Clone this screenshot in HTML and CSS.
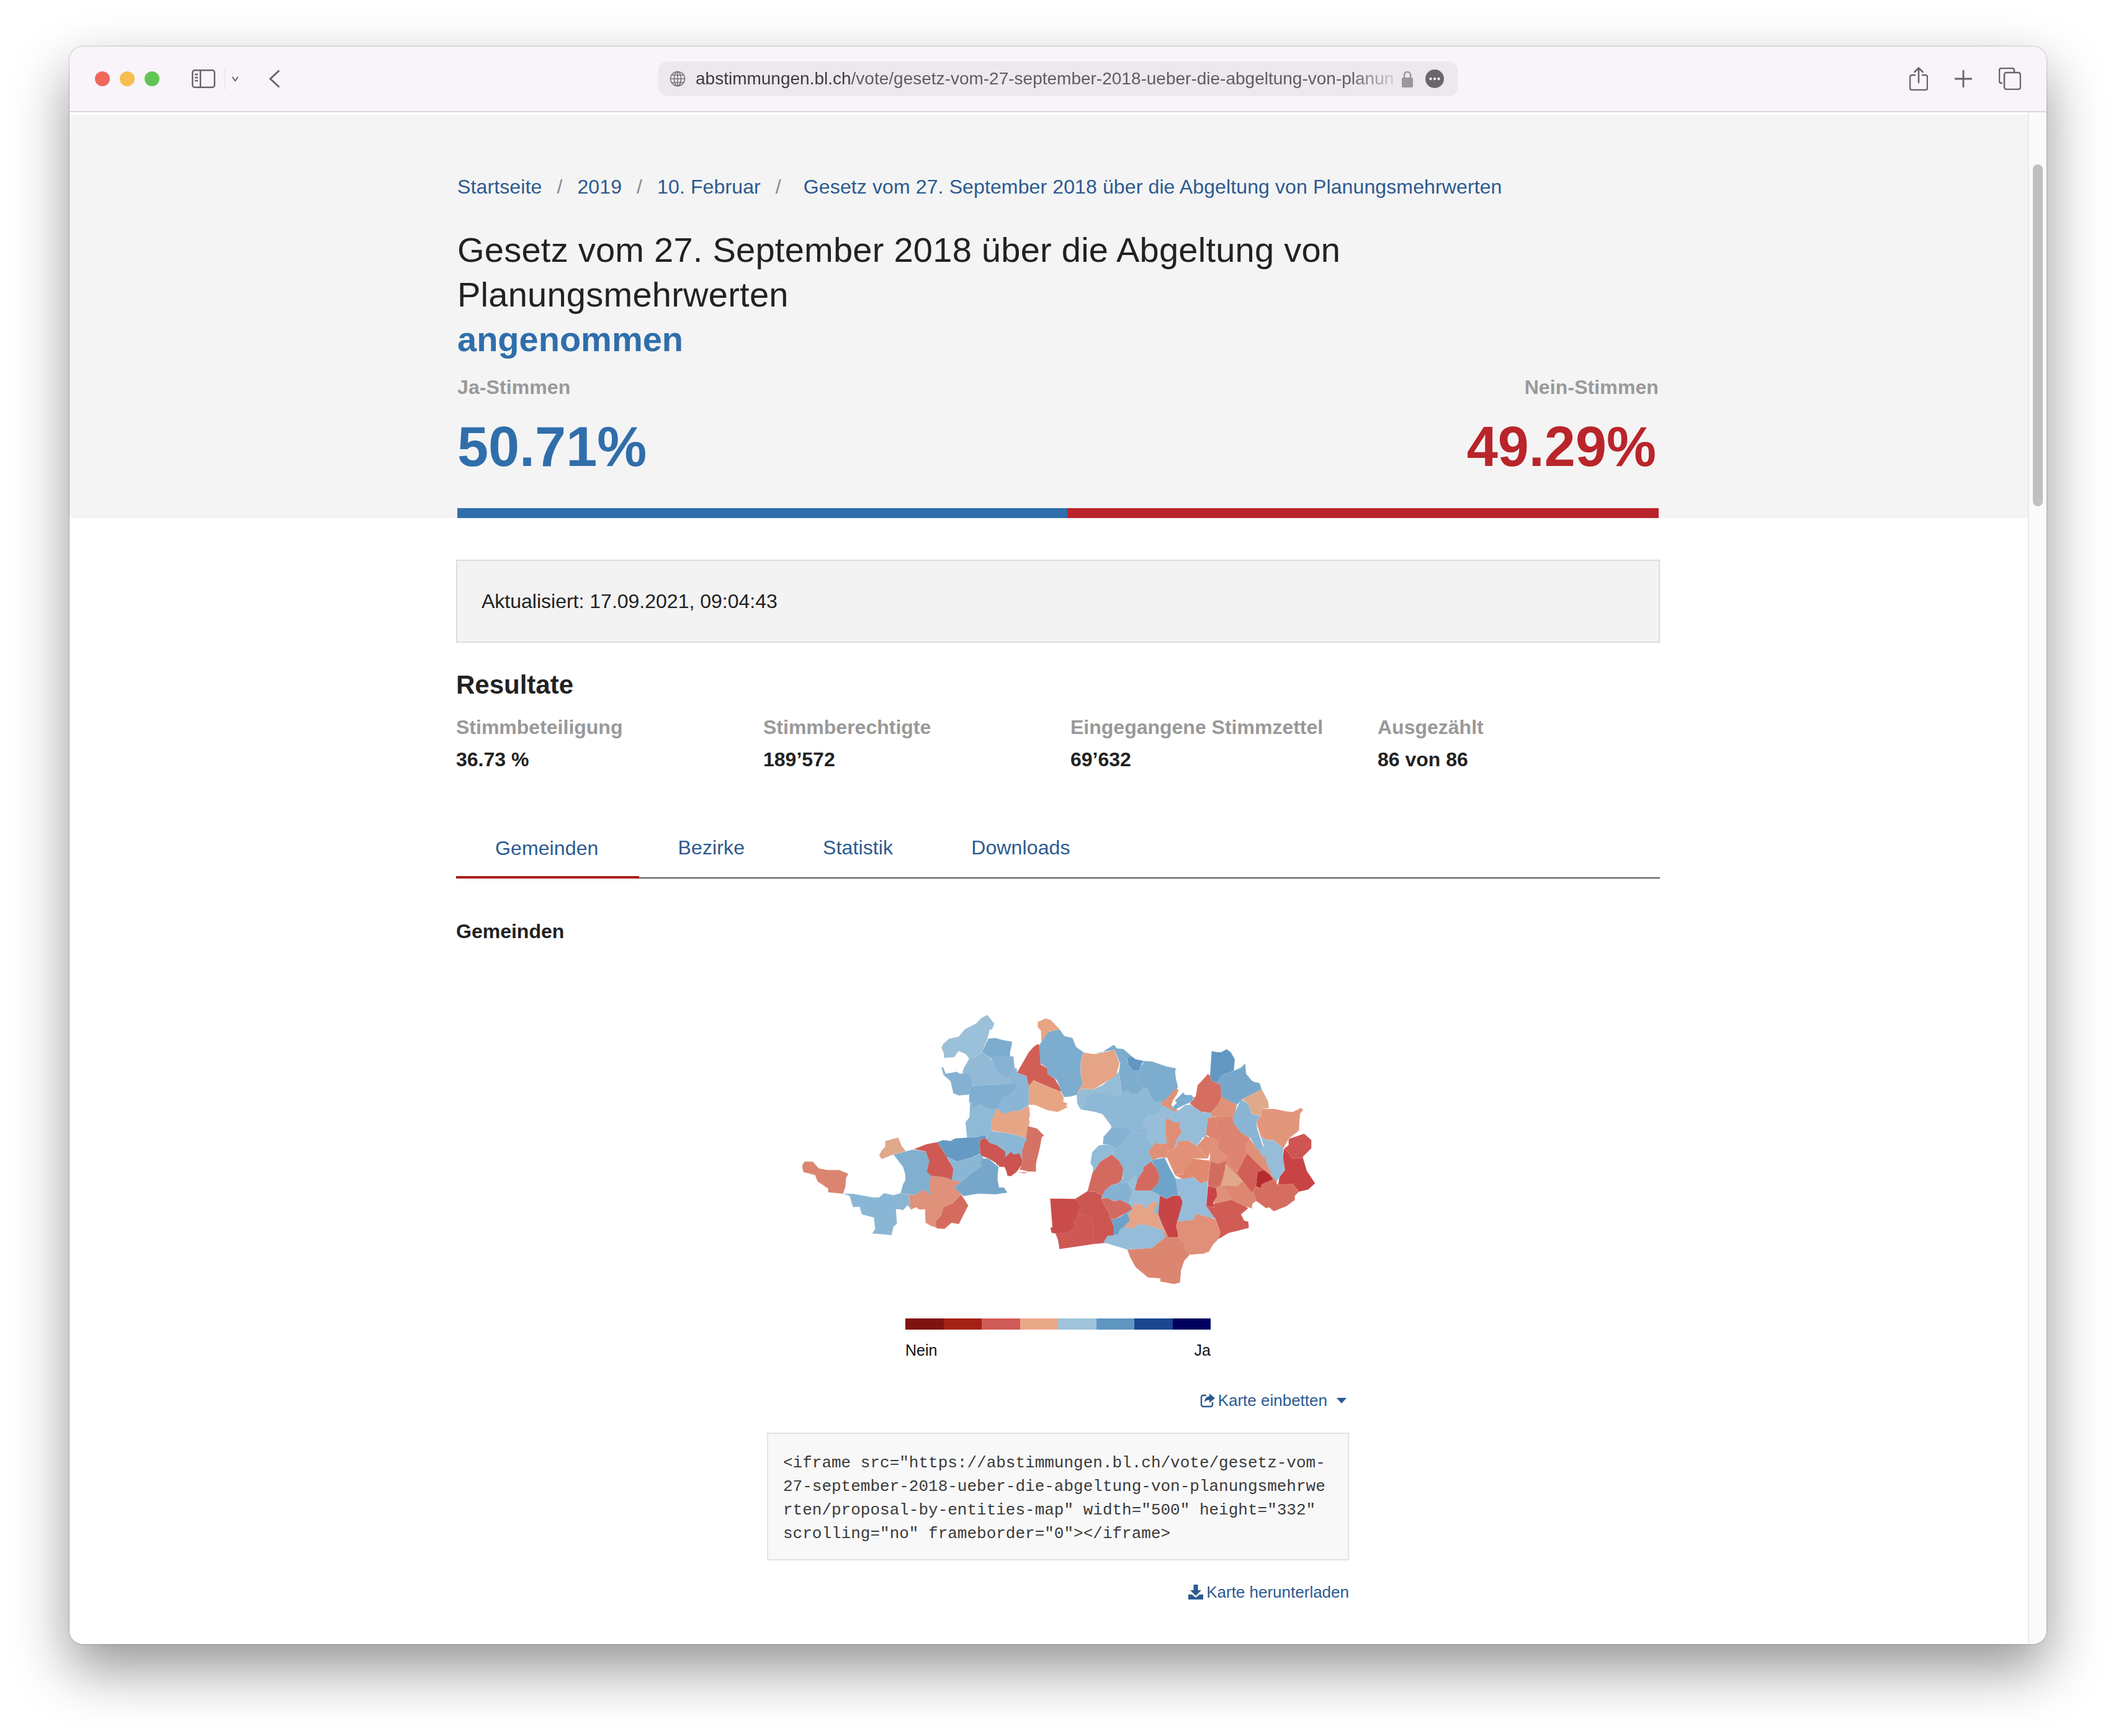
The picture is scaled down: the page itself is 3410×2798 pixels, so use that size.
FILE: index.html
```html
<!DOCTYPE html>
<html lang="de">
<head>
<meta charset="utf-8">
<title>Gesetz vom 27. September 2018</title>
<link rel="stylesheet" href="styles.css">
</head>
<body>
<div class="window">
  <header class="toolbar">
    <div class="lights"><i class="light red"></i><i class="light yellow"></i><i class="light green"></i></div>
    <svg class="ic-sidebar" width="38" height="30" viewBox="0 0 38 30"><rect x="1.25" y="1.25" width="35.5" height="27.5" rx="3.5" fill="none" stroke="#68646a" stroke-width="2.5"/><path d="M14 1v28" stroke="#68646a" stroke-width="2.5"/><path d="M5 8h5M5 13h5M5 18h5" stroke="#68646a" stroke-width="2.5"/></svg>
    <i class="tb-divider"></i>
    <svg class="ic-chev" width="10" height="9" viewBox="0 0 10 9"><path d="M1 1.5l4 6 4-6" fill="none" stroke="#68646a" stroke-width="2" stroke-linecap="round" stroke-linejoin="round"/></svg>
    <svg class="ic-back" width="18" height="28" viewBox="0 0 18 28"><path d="M16 1.5L2.5 14 16 26.5" fill="none" stroke="#68646a" stroke-width="3" stroke-linecap="round" stroke-linejoin="round"/></svg>
    <div class="urlbar">
      <svg class="ic-globe" width="26" height="26" viewBox="0 0 26 26" fill="none" stroke="#77737a" stroke-width="1.6"><circle cx="13" cy="13" r="11.5"/><ellipse cx="13" cy="13" rx="5.5" ry="11.5"/><path d="M13 1.5v23M1.5 13h23M3.5 7h19M3.5 19h19"/></svg>
      <span class="url"><b>abstimmungen.bl.ch</b>/vote/gesetz-vom-27-september-2018-ueber-die-abgeltung-von-planun</span>
      <svg class="ic-lock" width="20" height="27" viewBox="0 0 20 27"><path d="M5 12V7a5 5 0 0 1 10 0v5" fill="none" stroke="#9a969b" stroke-width="2.4"/><rect x="1" y="11" width="18" height="16" rx="2.5" fill="#9a969b"/></svg>
      <svg class="ic-more" width="30" height="30" viewBox="0 0 30 30"><circle cx="15" cy="15" r="15" fill="#69656b"/><circle cx="8.5" cy="15" r="2.2" fill="#f0edf1"/><circle cx="15" cy="15" r="2.2" fill="#f0edf1"/><circle cx="21.5" cy="15" r="2.2" fill="#f0edf1"/></svg>
    </div>
    <div class="tb-right">
      <svg width="30" height="38" viewBox="0 0 30 38" fill="none" stroke="#68646a" stroke-width="2.5" stroke-linecap="round" stroke-linejoin="round"><path d="M9 13H4a3 3 0 0 0-3 3v18a3 3 0 0 0 3 3h22a3 3 0 0 0 3-3V16a3 3 0 0 0-3-3h-5"/><path d="M15 25V2M8.5 8L15 1.5 21.5 8"/></svg>
      <svg width="28" height="28" viewBox="0 0 28 28"><path d="M14 1v26M1 14h26" stroke="#68646a" stroke-width="2.8" stroke-linecap="round"/></svg>
      <svg width="36" height="36" viewBox="0 0 36 36" fill="none" stroke="#68646a" stroke-width="2.5"><path d="M6 25H4a3 3 0 0 1-3-3V4a3 3 0 0 1 3-3h18a3 3 0 0 1 3 3v3"/><rect x="9" y="8" width="26" height="27" rx="3.5"/></svg>
    </div>
  </header>
  <div class="viewport">
    <main class="page">
      <section class="hero">
        <nav class="crumbs">
          <a>Startseite</a><span class="sep">/</span><a>2019</a><span class="sep">/</span><a>10. Februar</a><span class="sep sep-last">/</span><a>Gesetz vom 27. September 2018 über die Abgeltung von Planungsmehrwerten</a>
        </nav>
        <h1 class="title">Gesetz vom 27. September 2018 über die Abgeltung von<br>Planungsmehrwerten</h1>
        <div class="verdict">angenommen</div>
        <div class="vote-labels"><span>Ja-Stimmen</span><span>Nein-Stimmen</span></div>
        <div class="vote-nums"><span class="yes">50.71%</span><span class="no">49.29%</span></div>
        <div class="vote-bar"><i class="bar-yes"></i><i class="bar-no"></i></div>
      </section>
      <section class="content">
        <div class="updated">Aktualisiert: 17.09.2021, 09:04:43</div>
        <h2 class="results">Resultate</h2>
        <div class="stats">
          <div><div class="stat-label">Stimmbeteiligung</div><div class="stat-value">36.73 %</div></div>
          <div><div class="stat-label">Stimmberechtigte</div><div class="stat-value">189’572</div></div>
          <div><div class="stat-label">Eingegangene Stimmzettel</div><div class="stat-value">69’632</div></div>
          <div><div class="stat-label">Ausgezählt</div><div class="stat-value">86 von 86</div></div>
        </div>
        <div class="tabs">
          <a class="tab active">Gemeinden</a><a class="tab">Bezirke</a><a class="tab">Statistik</a><a class="tab">Downloads</a>
        </div>
        <h3 class="sub">Gemeinden</h3>
        <svg class="map" width="900" height="500" viewBox="1255 1600 900 500" stroke="#fff" stroke-opacity=".28" stroke-width=".9">
          <g transform="translate(1260 1600) scale(.3827 .3333)" stroke="none">
            <polygon fill="#8ab5d4" points="790,330 960,325 975,400 1035,420 1035,550 885,650 882,690 810,690 790,610 795,480 765,392"/>
            <polygon fill="#8bb6d5" points="865,705 1025,710 1010,835 945,830 905,830 850,780"/>
            <polygon fill="#dc8f78" points="1030,660 1070,680 1060,860 1005,855"/>
            <polygon fill="#80afd0" points="500,790 610,780 720,830 830,800 900,850 900,960 760,975 640,985 520,970 520,880"/>
          </g>
          <g transform="translate(1660 1600) scale(.3333)" stroke="none">
            <polygon fill="#8db8d6" points="250,480 640,480 700,570 870,590 850,700 660,745 610,810 700,900 850,925 850,1030 890,1090 700,1110 640,1130 430,1150 460,1020 350,990 450,900 425,800 400,760 360,720 395,650 350,590 250,560"/>
            <polygon fill="#dc8a72" points="860,610 990,590 1070,720 1200,880 1170,1040 1090,1010 1060,1040 900,1030 860,930 870,800"/>
            <polygon fill="#7dadce" points="440,340 700,370 710,470 630,530 440,490"/>
            <polygon fill="#d8766a" points="790,510 920,440 990,380 1110,450 1030,510 940,560 880,590 790,560"/>
            <polygon fill="#dc8a72" points="540,1190 700,1100 890,1100 900,1200 750,1270 540,1240"/>
            <polygon fill="#cc5552" points="200,1010 340,990 400,1100 400,1205 150,1235 120,1160"/>
          </g>
          <g transform="translate(1260 1600) scale(.3827 .3333)">
            <polygon fill="#9bc0d9" points="865,110 895,153 885,180 875,182 865,230 842,290 810,318 788,322 775,300 745,285 725,315 683,318 682,295 672,270 680,250 705,225 745,215 770,180 805,160 820,150 840,125"/>
            <polygon fill="#7cacce" points="870,225 900,222 930,232 970,240 965,270 960,300 965,320 880,320 842,290"/>
            <polygon fill="#92bad6" points="790,320 810,318 842,290 880,322 900,370 930,405 960,420 960,437 900,450 835,450 800,458 800,405 760,390 765,370 785,330"/>
            <polygon fill="#86b2d3" points="880,315 955,312 975,310 980,365 970,375 965,415 930,405 900,370"/>
            <polygon fill="#84b1d2" points="672,362 680,365 690,395 715,390 735,385 750,395 775,390 800,405 800,458 790,465 790,495 745,500 722,490 710,430 680,400"/>
            <polygon fill="#7faed0" points="835,450 905,450 990,438 985,470 960,495 930,510 905,565 870,565 838,542 805,562 802,533 788,533 790,465 800,458"/>
            <polygon fill="#8ab5d4" points="970,365 990,370 990,390 1030,405 1040,440 1040,545 1030,555 1000,575 970,575 940,590 905,565 930,510 960,495 985,470 990,438 965,437 960,420 965,415"/>
            <polygon fill="#d15f57" points="1075,252 1085,255 1090,350 1120,370 1120,395 1150,420 1175,470 1175,482 1125,460 1060,427 1040,455 1030,405 990,390 1040,290 1060,265"/>
            <polygon fill="#e7a583" points="1060,427 1125,460 1175,482 1187,510 1185,530 1205,540 1195,550 1205,555 1180,570 1160,580 1115,570 1065,545 1040,545 1040,455"/>
            <polygon fill="#8fb9d6" points="805,562 838,542 870,565 905,565 882,625 882,670 865,700 820,700 780,705 773,630 790,605"/>
            <polygon fill="#e6a685" points="905,565 940,590 970,575 1000,575 1030,555 1040,550 1045,590 1040,620 1045,625 1025,705 1000,695 940,680 882,670 882,625"/>
            <polygon fill="#d47365" points="1035,647 1075,660 1105,695 1095,700 1085,760 1070,830 1070,868 1040,868 1000,858 1015,825 1010,770 1030,705"/>
            <polygon fill="#8bb6d5" points="882,672 940,680 1000,695 1025,705 1033,712 1015,740 1010,780 1000,780 965,770 945,790 940,760 905,740 860,710 865,700"/>
            <polygon fill="#cd5552" points="845,708 860,708 875,730 905,740 940,770 942,795 910,840 900,825 870,805 835,790 833,720"/>
            <polygon fill="#cb5350" points="965,772 975,785 1000,780 1012,810 1012,830 990,868 1020,872 1040,868 1020,877 990,868 965,890 950,888 945,865 937,845 915,845 912,830 942,797"/>
            <polygon fill="#659bc3" points="655,725 680,715 710,720 730,707 830,700 850,692 862,700 860,708 845,708 833,720 835,780 800,800 738,820 695,797"/>
            <polygon fill="#cf5a55" points="555,760 610,735 655,725 695,797 723,855 715,908 690,897 628,888 610,870 620,815 605,770"/>
            <polygon fill="#8ab6d5" points="697,798 738,820 800,800 835,780 848,800 835,825 845,840 800,875 757,918 718,907 723,855"/>
            <polygon fill="#76a7cb" points="840,805 870,805 912,845 908,905 915,945 935,945 950,970 900,978 825,975 765,987 725,942 757,918 800,875 845,840 835,825"/>
            <polygon fill="#80afd0" points="470,785 550,762 605,770 620,815 610,870 628,888 620,935 627,983 597,955 560,982 500,972 510,930 525,900 510,845 490,815"/>
            <polygon fill="#e0a98c" points="435,720 490,703 505,745 522,770 470,785 420,808 410,790 420,765 435,750"/>
            <polygon fill="#db8570" points="95,820 130,820 155,852 190,860 240,860 280,878 270,900 268,940 258,975 195,968 195,950 150,915 140,885 90,870 85,840"/>
            <polygon fill="#8ab6d5" points="258,975 300,975 385,993 410,992 430,972 470,982 500,972 535,978 543,1052 530,1030 510,1055 495,1050 480,1050 485,1120 470,1135 462,1175 380,1167 393,1145 387,1090 337,1075 327,1037 300,1040 285,985"/>
            <polygon fill="#df9179" points="628,888 690,897 715,908 755,918 725,942 755,978 720,1020 680,1040 670,1080 645,1110 652,1140 628,1130 605,1115 603,1050 580,1052 565,1040 543,1052 535,978 560,982 597,955 627,983 620,935"/>
            <polygon fill="#d56b5f" points="755,978 767,1000 785,1032 745,1122 715,1115 685,1145 652,1142 645,1110 670,1080 680,1040 720,1020"/>
          </g>
          <g transform="translate(1660 1600) scale(.3333)">
            <polygon fill="#e7a583" points="37,145 75,127 100,135 143,180 90,192 75,248 55,240 52,185 37,170"/>
            <polygon fill="#7cacce" points="90,192 143,180 165,212 205,222 222,265 258,290 245,340 245,400 255,440 225,497 195,505 165,508 150,480 130,425 85,395 85,370 50,345 45,255"/>
            <polygon fill="#c94c4b" points="97,998 218,1000 245,1035 232,1065 230,1085 210,1110 218,1135 185,1162 130,1168 105,1165 98,1142 108,1135"/>
            <polygon fill="#cc5552" points="218,1000 278,962 312,965 350,983 342,1010 378,1060 385,1095 405,1130 405,1210 310,1218 302,1095 232,1065 245,1035"/>
            <polygon fill="#ce5854" points="232,1065 302,1095 305,1135 310,1218 142,1243 130,1168 185,1162 218,1135 210,1110 230,1085"/>
            <polygon fill="#92bbd7" points="332,742 375,735 420,757 395,785 340,820 300,890 305,850 292,825 300,775"/>
            <polygon fill="#d4695f" points="395,785 430,815 450,850 445,905 425,925 390,935 350,983 312,965 278,962 300,880 340,820"/>
            <polygon fill="#85b2d3" points="395,655 450,648 490,675 465,715 420,757 375,735 352,735 355,700"/>
            <polygon fill="#8cb7d5" points="490,675 565,695 570,720 590,735 573,770 590,800 585,815 545,850 550,865 505,955 470,920 450,910 450,850 430,815 395,785 420,757 465,715"/>
            <polygon fill="#8db8d6" points="320,480 400,500 445,490 470,473 490,490 520,490 550,460 570,470 585,510 605,533 635,530 640,555 615,590 565,600 545,635 570,670 565,690 490,672 450,648 395,655 375,610 350,585 245,568 270,535 260,520 285,500"/>
            <polygon fill="#96bdd8" points="255,465 305,472 350,450 430,385 445,490 400,500 320,480 285,500 260,520 270,535 245,568 228,540 225,495"/>
            <polygon fill="#e5a486" points="258,292 310,300 410,280 432,345 415,405 365,435 305,472 255,465 225,497 255,440 245,400 245,340"/>
            <polygon fill="#7cacce" points="305,295 345,292 405,255 420,272 450,275 480,300 490,310 435,345 410,280"/>
            <polygon fill="#5f97c2" points="470,318 490,310 510,325 550,333 530,360 530,378 500,380 475,350"/>
            <polygon fill="#7dadce" points="435,345 470,318 475,350 500,380 530,378 520,405 525,440 550,460 520,490 490,490 470,473 445,490 430,385"/>
            <polygon fill="#7dadce" points="550,333 590,335 660,360 705,368 700,395 715,460 695,490 665,525 605,533 585,510 570,470 550,460 525,440 520,405 530,378"/>
            <polygon fill="#e09175" points="700,468 718,470 710,495 690,525 680,555 715,570 700,580 670,562 635,545 635,535 665,510"/>
            <polygon fill="#7cacce" points="740,485 750,497 780,497 790,510 785,530 745,545 700,570 690,555 710,535 700,525 715,510"/>
            <polygon fill="#97bdd8" points="640,555 655,555 690,580 680,615 655,620 650,680 665,730 590,735 570,720 565,690 570,670 545,635 565,600 615,590"/>
            <polygon fill="#96bdd8" points="690,580 715,575 750,545 775,545 835,580 880,585 880,605 860,610 845,690 805,745 765,718 720,720 695,760 705,710 735,675 720,630 680,615"/>
            <polygon fill="#df8e75" points="665,610 695,630 730,630 720,650 735,675 710,710 695,760 665,770 655,680 655,620"/>
            <polygon fill="#e09076" points="605,728 630,735 670,730 665,770 670,800 635,800 610,805 590,812 573,770"/>
            <polygon fill="#e29177" points="695,760 720,720 765,718 805,745 860,805 790,805 740,880 700,885 680,840 658,790 665,770"/>
            <polygon fill="#e0896f" points="790,805 870,815 860,915 825,925 790,895 745,908 700,885 740,880 750,850"/>
            <polygon fill="#6fa4ca" points="605,810 650,800 680,860 705,905 715,985 690,980 660,1000 630,983 585,960 620,925 625,885 590,815"/>
            <polygon fill="#d46a5f" points="585,820 610,850 625,885 620,925 585,960 505,960 520,905 550,860 545,850"/>
            <polygon fill="#85b2d3" points="430,925 470,920 490,935 495,960 480,1015 435,1005 405,1012 375,995 345,1000 360,960 390,935"/>
            <polygon fill="#98bfd9" points="505,890 515,895 505,960 585,960 630,983 625,1015 590,1015 560,1050 545,1025 505,1025 520,1060 480,1020 495,960 470,920"/>
            <polygon fill="#e5a486" points="500,1025 545,1025 552,1050 590,1015 620,1015 595,1065 620,1072 625,1100 668,1185 640,1150 560,1125 515,1125 510,1140 455,1140 480,1105 470,1090 495,1050"/>
            <polygon fill="#d36a5f" points="345,1000 375,995 405,1012 435,1005 480,1025 495,1050 470,1065 410,1098 385,1095 378,1060"/>
            <polygon fill="#6ca1c8" points="470,1070 483,1105 455,1130 425,1175 405,1175 405,1130 390,1098 410,1098"/>
            <polygon fill="#95bcd8" points="435,1145 510,1140 515,1125 560,1125 640,1150 655,1185 590,1238 470,1245 355,1210 375,1178 425,1175"/>
            <polygon fill="#c84446" points="628,985 660,1000 690,985 725,985 738,1015 735,1080 712,1105 715,1185 668,1185 640,1125 620,1075"/>
            <polygon fill="#dc8671" points="655,1185 710,1185 755,1215 745,1240 772,1270 745,1300 730,1345 725,1405 695,1412 630,1400 630,1385 570,1380 510,1330 485,1285 470,1245 590,1238"/>
            <polygon fill="#e09078" points="712,1110 790,1100 805,1072 895,1097 920,1160 910,1195 885,1220 865,1255 840,1265 772,1270 745,1240 755,1215 720,1190 705,1130"/>
            <polygon fill="#95bcd8" points="705,905 760,900 790,895 825,925 860,915 852,1035 900,1097 805,1072 790,1100 712,1110 738,1015 725,985 715,985"/>
            <polygon fill="#c84446" points="860,937 900,948 905,985 885,1020 890,1040 852,1035"/>
            <polygon fill="#e09078" points="900,948 935,935 960,975 975,1005 885,1025 905,985"/>
            <polygon fill="#d15b55" points="885,1025 975,1005 1055,1045 1020,1075 1035,1105 1055,1110 1058,1140 1000,1155 960,1165 910,1195 920,1160 895,1095 852,1035 890,1040"/>
            <polygon fill="#d36c60" points="875,815 925,825 950,810 945,850 920,935 900,945 860,935 865,870"/>
            <polygon fill="#e0907a" points="870,775 905,755 955,795 945,815 925,825 905,830 875,820"/>
            <polygon fill="#e0a98c" points="945,830 1030,915 1000,938 925,935 940,880"/>
            <polygon fill="#dd8670" points="1000,938 1030,915 1060,945 1095,1010 1075,1020 1072,1047 975,1005 960,975 935,935"/>
            <polygon fill="#dd8470" points="895,605 975,600 985,630 1020,680 1065,715 1045,730 1042,755 1050,780 1010,855 985,860 950,810 955,795 905,755 910,725 905,640"/>
            <polygon fill="#d15e57" points="1050,780 1110,840 1135,860 1100,870 1090,945 1072,970 1030,915 1000,875"/>
            <polygon fill="#b82a2f" points="1100,870 1140,858 1175,905 1120,930 1115,948 1092,940"/>
            <polygon fill="#d66d61" points="1120,930 1175,905 1200,932 1270,928 1300,965 1280,985 1280,1005 1240,1035 1178,1060 1155,1040 1140,1045 1095,1010 1080,965 1090,945 1115,948"/>
            <polygon fill="#c94345" points="1228,757 1245,770 1270,805 1320,803 1338,865 1378,925 1345,955 1300,965 1270,928 1200,932 1205,895 1232,860 1222,800"/>
            <polygon fill="#ce5552" points="1250,710 1325,685 1360,715 1360,755 1320,795 1320,803 1270,805 1245,770 1228,757 1250,740"/>
            <polygon fill="#96bdd8" points="1115,698 1145,715 1175,715 1225,755 1222,800 1232,860 1205,895 1195,915 1165,885 1140,815 1100,760 1130,745"/>
            <polygon fill="#e09178" points="1045,730 1060,715 1110,770 1120,795 1150,800 1125,810 1165,870 1155,880 1130,860 1050,780 1042,755"/>
            <polygon fill="#dd8470" points="880,605 895,605 905,640 920,720 860,695 850,690 860,610"/>
            <polygon fill="#e09078" points="850,695 910,725 910,755 870,775 860,805 805,745"/>
            <polygon fill="#8ab5d4" points="1020,518 1055,540 1072,590 1115,600 1095,625 1098,660 1125,745 1130,750 1100,765 1065,705 1020,680 985,635 980,600"/>
            <polygon fill="#e2967c" points="1120,565 1180,565 1240,577 1270,580 1310,560 1320,568 1305,590 1300,670 1250,710 1225,755 1175,715 1145,715 1115,698 1100,650 1095,625 1115,600"/>
            <polygon fill="#e0a98c" points="1025,518 1120,470 1150,525 1155,560 1120,565 1115,600 1072,590 1055,540"/>
            <polygon fill="#df9178" points="925,505 1000,545 985,600 880,605 875,580 910,540"/>
            <polygon fill="#d56d61" points="860,395 870,405 880,430 905,440 920,445 925,505 910,540 875,580 830,580 772,540 800,510 810,450 830,430"/>
            <polygon fill="#6398c3" points="878,285 905,290 925,290 950,276 970,290 990,325 985,380 925,405 905,440 880,430 870,405"/>
            <polygon fill="#76a7cb" points="905,440 925,405 985,380 1020,365 1040,345 1045,395 1075,432 1110,440 1120,470 1025,518 1000,545 925,505 920,445"/>
          </g>
        </svg>
        <div class="legend"><i class="s1"></i><i class="s2"></i><i class="s3"></i><i class="s4"></i><i class="s5"></i><i class="s6"></i><i class="s7"></i><i class="s8"></i></div>
        <div class="legend-labels"><span>Nein</span><span>Ja</span></div>
        <div class="embed">
          <a class="embed-link link-top">
            <svg width="24" height="24" viewBox="0 0 24 24"><path d="M10 4H5a3 3 0 0 0-3 3v12a3 3 0 0 0 3 3h12a3 3 0 0 0 3-3v-4" fill="none" stroke="#2c5a8f" stroke-width="2.4"/><path d="M15 1l9 7.5-9 7.5v-4.5c-4.500 0-6.500 1-8 4.500 0-6.500 3-10 8-10.500z" fill="#2c5a8f"/></svg>
            <span>Karte einbetten</span><i class="caret"></i>
          </a>
          <pre class="code">&lt;iframe src="https://abstimmungen.bl.ch/vote/gesetz-vom-27-september-2018-ueber-die-abgeltung-von-planungsmehrwerten/proposal-by-entities-map" width="500" height="332" scrolling="no" frameborder="0"&gt;&lt;/iframe&gt;</pre>
          <a class="embed-link link-bottom">
            <svg width="24" height="24" viewBox="0 0 24 24"><path d="M8.500 0h7v9H21l-9 9-9-9h5.500z" fill="#2c5a8f"/><path d="M0 16h6l6 5 6-5h6v8H0z" fill="#2c5a8f"/></svg>
            <span>Karte herunterladen</span>
          </a>
        </div>
      </section>
    </main>
    <aside class="scrollbar"><i class="thumb"></i></aside>
  </div>
</div>
</body>
</html>
```

FILE: styles.css
```css
* { box-sizing: border-box; }
html, body { margin: 0; background: #fff; }
body {
  width: 3410px;
  height: 2798px;
  padding: 75px 112px 148px;
  overflow: hidden;
  font-family: "Liberation Sans", Arial, sans-serif;
  color: #222;
}
a { color: #2c5a8f; text-decoration: none; }
.window {
  width: 3186px;
  height: 2575px;
  display: flex;
  flex-direction: column;
  border-radius: 22px;
  background: #fff;
  box-shadow: 0 40px 90px rgba(0,0,0,.42), 0 0 2px rgba(0,0,0,.55);
}

/* toolbar */
.toolbar {
  flex: none;
  height: 106px;
  display: flex;
  align-items: center;
  background: #f8f4fa;
  border-bottom: 2px solid #dcd9dd;
  border-radius: 22px 22px 0 0;
}
.lights { display: flex; gap: 16px; margin-left: 41px; }
.light { width: 24px; height: 24px; border-radius: 50%; display: block; }
.red { background: #f0675c; }
.yellow { background: #f5be4f; }
.green { background: #61c554; }
.ic-sidebar { margin-left: 52px; }
.tb-divider { width: 1px; height: 36px; background: #e3dfe4; margin-left: 15px; }
.ic-chev { margin-left: 11px; }
.ic-back { margin-left: 49px; }
.urlbar {
  margin-left: 610px;
  width: 1288px;
  height: 56px;
  background: #ece8ee;
  border-radius: 14px;
  display: flex;
  align-items: center;
  padding-left: 18px;
}
.ic-globe { flex: none; }
.url {
  margin-left: 16px;
  width: 1124px;
  font-size: 28px;
  line-height: 36px;
  color: #5f5c62;
  white-space: nowrap;
  overflow: hidden;
  -webkit-mask-image: linear-gradient(90deg, #000 94%, rgba(0,0,0,.2) 100%);
  mask-image: linear-gradient(90deg, #000 94%, rgba(0,0,0,.2) 100%);
}
.url b { font-weight: normal; color: #3d3a40; }
.ic-lock { flex: none; margin-left: 13px; }
.ic-more { flex: none; margin-left: 19px; }
.tb-right { display: flex; align-items: center; margin-left: 728px; gap: 43px; }

/* page */
.viewport { flex: 1; display: flex; min-height: 0; border-radius: 0 0 22px 22px; overflow: hidden; }
.page { flex: 1; min-width: 0; padding-top: 4px; background: #fff; }
.scrollbar {
  flex: none;
  width: 30px;
  background: #fafafa;
  border-left: 2px solid #ebebeb;
  padding: 84px 6px 0 6px;
}
.thumb { display: block; width: 16px; height: 551px; border-radius: 8px; background: #c0c0c0; }

.hero { background: #f4f4f4; height: 650px; padding: 96px 0 0 625px; }
.hero > * { width: 1936px; }
.crumbs { font-size: 32px; line-height: 40px; white-space: nowrap; letter-spacing: .12px; }
.sep { color: #8a8a8a; margin: 0 24px 0 24px; }
.sep-last { margin-right: 36px; margin-left: 24px; }
.title { margin: 46px 0 0; font-size: 56px; line-height: 72px; font-weight: 400; color: #222; letter-spacing: .25px; }
.verdict { margin-top: 0; font-size: 56px; line-height: 72px; font-weight: 700; color: #306eab; }
.vote-labels { margin-top: 21px; display: flex; justify-content: space-between; font-size: 32px; line-height: 40px; font-weight: 700; color: #999; letter-spacing: .1px; }
.vote-nums { margin-top: 26px; display: flex; justify-content: space-between; font-size: 90px; line-height: 100px; font-weight: 700; }
.yes { color: #306eab; }
.no { color: #b9252a; margin-right: 4px; }
.vote-bar { margin-top: 49px; height: 16px; display: flex; }
.bar-yes { width: 983px; background: #306eab; }
.bar-no { flex: 1; background: #b9252a; }

.content { width: 1940px; margin-left: 623px; padding-top: 67px; }
.updated {
  height: 134px;
  padding-left: 39px;
  display: flex;
  align-items: center;
  background: #f3f3f3;
  border: 2px solid #ddd;
  font-size: 32px;
  color: #222;
}
.results { margin: 43px 0 0; font-size: 42px; line-height: 50px; font-weight: 700; }
.stats { margin-top: 23px; display: grid; grid-template-columns: repeat(4, 495px); white-space: nowrap; }
.stat-label { font-size: 32px; line-height: 40px; font-weight: 700; color: #999; }
.stat-value { margin-top: 12px; font-size: 32px; line-height: 40px; font-weight: 700; color: #222; }
.tabs { margin-top: 82px; display: flex; border-bottom: 2px solid #5c5c5c; letter-spacing: .12px; }
.tab { font-size: 32px; line-height: 40px; padding: 20px 63px 28px; }
.tab.active { padding: 21px 65px 25px 63px; margin-bottom: -2px; border-bottom: 4px solid #a9201a; }
.sub { margin: 65px 0 0; font-size: 32px; line-height: 40px; font-weight: 700; }
.map { display: block; margin: 78px auto 0; }
.legend { margin: 26px auto 0; width: 492px; height: 18px; display: flex; }
.legend i { flex: 1; }
.s1 { background: #7f140e; }
.s2 { background: #a52015; }
.s3 { background: #d05b58; }
.s4 { background: #e9a888; }
.s5 { background: #9fc3da; }
.s6 { background: #5f97c2; }
.s7 { background: #1b4691; }
.s8 { background: #00005f; }
.legend-labels { margin: 18px auto 0; width: 492px; display: flex; justify-content: space-between; font-size: 25px; line-height: 30px; color: #111; }
.embed { margin: 48px auto 0; width: 938px; }
.embed-link { display: flex; justify-content: flex-end; align-items: center; font-size: 26px; line-height: 36px; gap: 5px; }
.link-top { padding-right: 4px; }
.caret { margin-left: 10px; border: 8px solid transparent; border-top: 9px solid #2c5a8f; border-bottom: 0; }
.code {
  margin: 34px 0 33px;
  height: 206px;
  padding: 28px 24px 22px;
  background: #f8f8f8;
  border: 2px solid #e2e2e2;
  font-family: "Liberation Mono", monospace;
  font-size: 26px;
  line-height: 38px;
  color: #3a3a3a;
  white-space: pre-wrap;
  word-break: break-all;
}
```
